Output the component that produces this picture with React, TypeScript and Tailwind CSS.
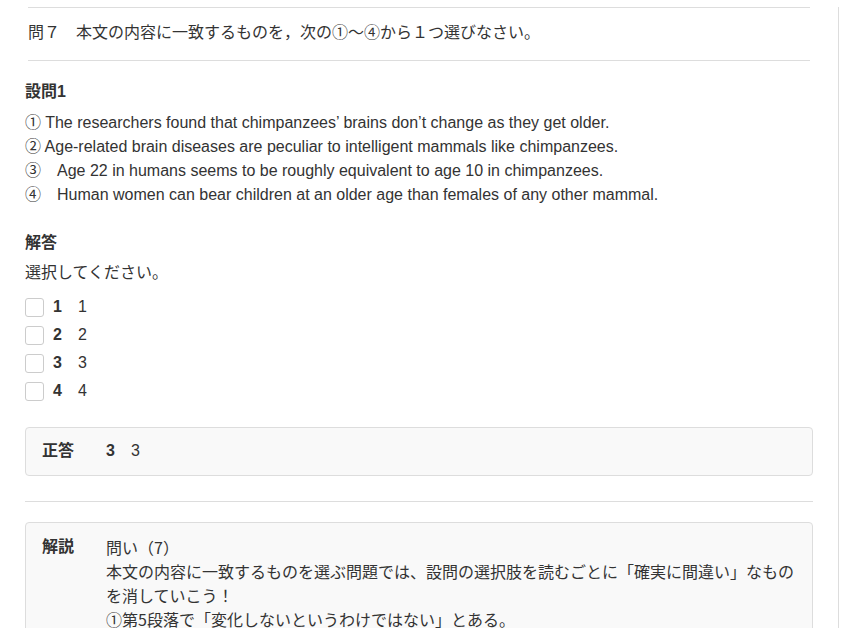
import React from "react";

const font = { fontFamily: '"Liberation Sans", Arial, "Noto Sans CJK JP", sans-serif' };

function Check({ n }: { n: string }) {
  return (
    <div className="flex items-center h-[28px]">
      <span className="w-[19px] h-[19px] border border-[#cccccc] rounded-[3px] bg-white box-border"></span>
      <span className="ml-[9px] font-bold w-[25px]">{n}</span>
      <span>{n}</span>
    </div>
  );
}

export default function App() {
  return (
    <div className="w-[851px] h-[628px] overflow-hidden bg-white text-[#333333] text-[16px] leading-[24px]" style={font}>
      <div className="w-[839px] h-full border-r border-[#dddddd] pl-[25px] pr-[25px]">
        <div className="mx-[3px] mt-[7px] border-t border-b border-[#dddddd] pt-[13px] pb-[15px]">
          問７　本文の内容に一致するものを，次の①～④から１つ選びなさい。
        </div>
        <div className="mt-[19px] font-bold">設問1</div>
        <div className="mt-[7px]">
          <div>① The researchers found that chimpanzees’ brains don’t change as they get older.</div>
          <div>② Age-related brain diseases are peculiar to intelligent mammals like chimpanzees.</div>
          <div>③　Age 22 in humans seems to be roughly equivalent to age 10 in chimpanzees.</div>
          <div>④　Human women can bear children at an older age than females of any other mammal.</div>
        </div>
        <div className="mt-[24px] font-bold">解答</div>
        <div className="mt-[6px]">選択してください。</div>
        <div className="mt-[8px]">
          <Check n="1" />
          <Check n="2" />
          <Check n="3" />
          <Check n="4" />
        </div>
        <div className="mt-[22px] border border-[#dddddd] rounded-[4px] bg-[#f9f9f9] pl-[16px] pr-[16px] pt-[11px] pb-[12px] flex">
          <div className="w-[64px] font-bold">正答</div>
          <div className="flex">
            <span className="font-bold w-[25px]">3</span>
            <span>3</span>
          </div>
        </div>
        <div className="mt-[25px] border-t border-[#dddddd]"></div>
        <div className="mt-[20px] border border-[#dddddd] rounded-[4px] bg-[#f9f9f9] pl-[16px] pr-[16px] pt-[12px] pb-[12px] flex">
          <div className="w-[64px] shrink-0 font-bold">解説</div>
          <div className="flex-1" style={{ fontFamily: '"Noto Sans CJK JP", sans-serif' }}>
            <div>問い（7）</div>
            <div>本文の内容に一致するものを選ぶ問題では、設問の選択肢を読むごとに「確実に間違い」なものを消していこう！</div>
            <div>①第5段落で「変化しないというわけではない」とある。</div>
          </div>
        </div>
      </div>
    </div>
  );
}
